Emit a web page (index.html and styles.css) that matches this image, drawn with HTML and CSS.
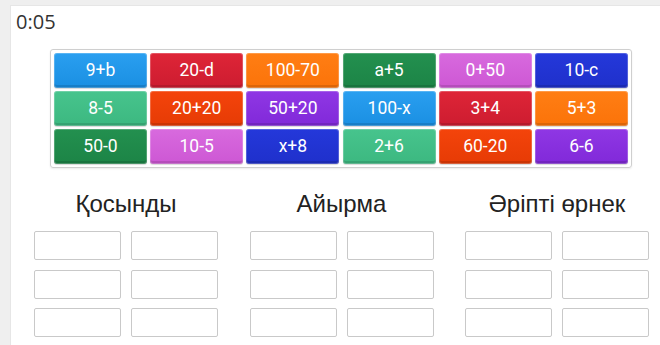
FILE: index.html
```html
<!DOCTYPE html>
<html>
<head>
<meta charset="utf-8">
<link rel="stylesheet" href="styles.css">
</head>
<body>
<div class="panel">
  <div class="timer">0:05</div>
  <div class="board">
    <div class="tile c-blue">9+b</div>
    <div class="tile c-red">20-d</div>
    <div class="tile c-orange">100-70</div>
    <div class="tile c-dgreen">a+5</div>
    <div class="tile c-orchid">0+50</div>
    <div class="tile c-dblue">10-c</div>
    <div class="tile c-lgreen">8-5</div>
    <div class="tile c-rorange">20+20</div>
    <div class="tile c-purple">50+20</div>
    <div class="tile c-blue">100-x</div>
    <div class="tile c-red">3+4</div>
    <div class="tile c-orange">5+3</div>
    <div class="tile c-dgreen">50-0</div>
    <div class="tile c-orchid">10-5</div>
    <div class="tile c-dblue">x+8</div>
    <div class="tile c-lgreen">2+6</div>
    <div class="tile c-rorange">60-20</div>
    <div class="tile c-purple">6-6</div>
  </div>
  <div class="groups">
    <div class="group">
      <div class="group-title">Қосынды</div>
      <div class="slots">
        <div class="slot"></div><div class="slot"></div>
        <div class="slot"></div><div class="slot"></div>
        <div class="slot"></div><div class="slot"></div>
      </div>
    </div>
    <div class="group">
      <div class="group-title">Айырма</div>
      <div class="slots">
        <div class="slot"></div><div class="slot"></div>
        <div class="slot"></div><div class="slot"></div>
        <div class="slot"></div><div class="slot"></div>
      </div>
    </div>
    <div class="group">
      <div class="group-title">Әріпті өрнек</div>
      <div class="slots">
        <div class="slot"></div><div class="slot"></div>
        <div class="slot"></div><div class="slot"></div>
        <div class="slot"></div><div class="slot"></div>
      </div>
    </div>
  </div>
</div>
</body>
</html>
```

FILE: styles.css
```css
html, body {
  margin: 0;
  padding: 0;
  background: #efefef;
  height: 100%;
  overflow: hidden;
}

.panel {
  margin: 5px 0 0 10px;
  background: #ffffff;
  height: calc(100% - 5px);
  padding-top: 4px;
  box-sizing: border-box;
  border-top: 1px solid #e6e6e6;
  border-left: 1px solid #e6e6e6;
  overflow: hidden;
}

.timer {
  font-family: "Open Sans", sans-serif;
  font-size: 20px;
  line-height: 24px;
  color: #333;
  padding-left: 5px;
}

.board {
  margin: 15px 0 0 39px;
  width: 574px;
  padding: 3px;
  border: 1px solid #cfcfcf;
  border-radius: 3px;
  display: grid;
  grid-template-columns: repeat(6, 93px);
  grid-auto-rows: 35px;
  column-gap: 3.2px;
  row-gap: 3px;
  box-shadow: 0 1px 2px rgba(0,0,0,0.08);
}

.tile {
  border-radius: 3px;
  color: #fff;
  font-family: Roboto, "Open Sans", sans-serif;
  font-size: 17.5px;
  font-weight: 400;
  display: flex;
  align-items: center;
  justify-content: center;
  box-shadow: inset 0 0 0 1px rgba(255,255,255,0.22), inset 0 -3px 0 rgba(0,0,0,0.12), 0 1px 1px rgba(0,0,0,0.15);
  padding-bottom: 1px;
  box-sizing: border-box;
}

.c-blue    { background: linear-gradient(#2a9ff0, #1a8fe2); }
.c-red     { background: linear-gradient(#de2537, #cd1c30); }
.c-orange  { background: linear-gradient(#ff7e14, #fb7309); }
.c-dgreen  { background: linear-gradient(#23904f, #1c8446); }
.c-orchid  { background: linear-gradient(#d86ade, #cd57d4); }
.c-dblue   { background: linear-gradient(#2438da, #1f30cb); }
.c-lgreen  { background: linear-gradient(#47c48d, #3cb880); }
.c-rorange { background: linear-gradient(#f4440b, #e63b05); }
.c-purple  { background: linear-gradient(#8f37e4, #8129d9); }

.groups {
  display: flex;
  gap: 31.5px;
  margin: 22px 0 0 23px;
}

.group {
  width: 184px;
}

.group-title {
  font-family: "Liberation Sans", Arial, sans-serif;
  font-size: 24px;
  line-height: 28px;
  color: #222;
  text-align: center;
  margin-bottom: 13px;
}

.slots {
  display: grid;
  grid-template-columns: 87px 87px;
  column-gap: 10px;
  row-gap: 9.5px;
}

.slot {
  border: 1px solid #c9c9c9;
  border-radius: 2px;
  box-sizing: border-box;
  height: 29px;
  background: #fff;
}
```
